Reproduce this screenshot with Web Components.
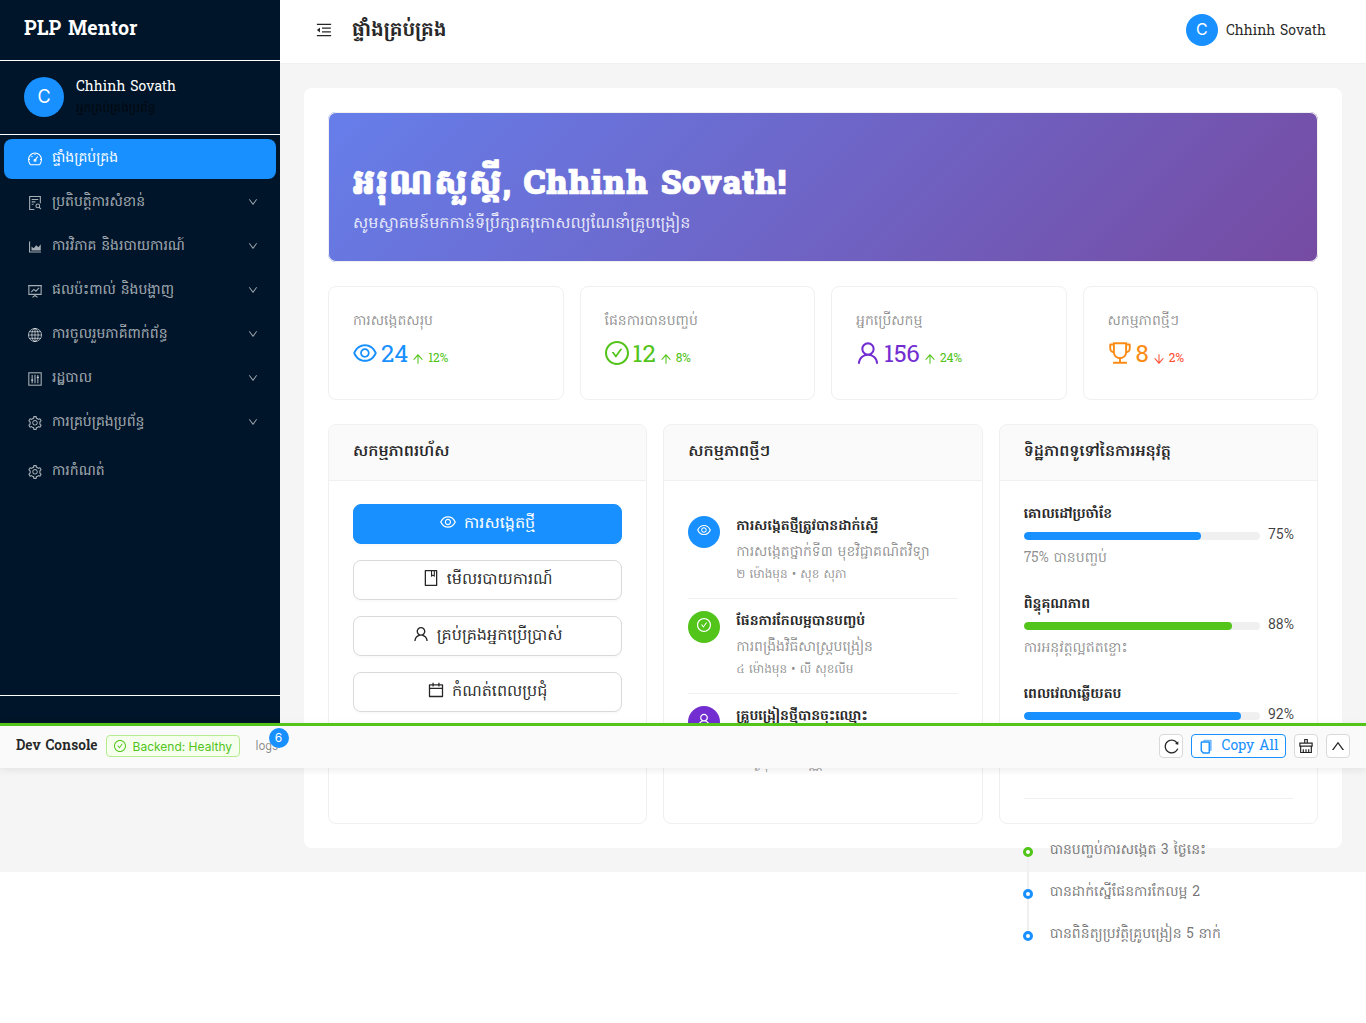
<!DOCTYPE html>
<html lang="km">
<head>
<meta charset="utf-8">
<title>PLP Mentor</title>
<style>
html,body{margin:0;padding:0;background:#fff;}
body{font-family:"Hanuman","Noto Sans Khmer","Roboto Slab","DejaVu Serif",serif;font-size:14px;color:rgba(0,0,0,.88);position:relative;height:1023px;overflow:hidden;}
</style>
</head>
<body>
<plp-app>
  <plp-sidebar slot="side">
    <plp-menu-item icon="dashboard" active>ផ្ទាំងគ្រប់គ្រង</plp-menu-item>
    <plp-menu-item icon="filesearch" arrow>ប្រតិបត្តិការសំខាន់</plp-menu-item>
    <plp-menu-item icon="area" arrow>ការវិភាគ និងរបាយការណ៍</plp-menu-item>
    <plp-menu-item icon="fund" arrow>ផលប៉ះពាល់ និងបង្ហាញ</plp-menu-item>
    <plp-menu-item icon="global" arrow>ការចូលរួមភាគីពាក់ព័ន្ធ</plp-menu-item>
    <plp-menu-item icon="control" arrow>រដ្ឋបាល</plp-menu-item>
    <plp-menu-item icon="setting" arrow>ការគ្រប់គ្រងប្រព័ន្ធ</plp-menu-item>
    <plp-menu-item icon="setting" spaced>ការកំណត់</plp-menu-item>
  </plp-sidebar>
  <plp-topbar slot="top"></plp-topbar>
  <hero-banner greet="អរុណសួស្តី," name="Chhinh Sovath!">សូមស្វាគមន៍មកកាន់ទីប្រឹក្សាគរុកោសល្យណែនាំគ្រូបង្រៀន</hero-banner>
  <stat-row>
    <stat-card label="ការសង្កេតសរុប" value="24" trend="12%" icon="eye" color="#1890ff"></stat-card>
    <stat-card label="ផែនការបានបញ្ចប់" value="12" trend="8%" icon="check" color="#52c41a"></stat-card>
    <stat-card label="អ្នកប្រើសកម្ម" value="156" trend="24%" icon="user" color="#722ed1"></stat-card>
    <stat-card label="សកម្មភាពថ្មីៗ" value="8" trend="2%" icon="trophy" color="#fa8c16" down></stat-card>
  </stat-row>
  <panel-row>
    <plp-panel heading="សកម្មភាពរហ័ស">
      <action-button icon="eye" primary>ការសង្កេតថ្មី</action-button>
      <action-button icon="book">មើលរបាយការណ៍</action-button>
      <action-button icon="user">គ្រប់គ្រងអ្នកប្រើប្រាស់</action-button>
      <action-button icon="calendar">កំណត់ពេលប្រជុំ</action-button>
    </plp-panel>
    <plp-panel heading="សកម្មភាពថ្មីៗ">
      <activity-item icon="eye" color="#1890ff" title="ការសង្កេតថ្មីត្រូវបានដាក់ស្នើ" desc="ការសង្កេតថ្នាក់ទី៣ មុខវិជ្ជាគណិតវិទ្យា" time="២ ម៉ោងមុន • សុខ សុភា"></activity-item>
      <activity-item icon="check" color="#52c41a" title="ផែនការកែលម្អបានបញ្ចប់" desc="ការពង្រឹងវិធីសាស្ត្របង្រៀន" time="៤ ម៉ោងមុន • លី សុខលីម"></activity-item>
      <activity-item icon="user" color="#722ed1" title="គ្រូបង្រៀនថ្មីបានចុះឈ្មោះ" desc="សាលាបឋមសិក្សាភ្នំពេញ" time="១ ថ្ងៃមុន • ជា វណ្ណា" last></activity-item>
    </plp-panel>
    <plp-panel heading="ទិដ្ឋភាពទូទៅនៃការអនុវត្ត">
      <progress-row label="គោលដៅប្រចាំខែ" pct="75" color="#1890ff" note="75% បានបញ្ចប់"></progress-row>
      <progress-row label="ពិន្ទុគុណភាព" pct="88" color="#52c41a" note="ការអនុវត្តល្អឥតខ្ចោះ"></progress-row>
      <progress-row label="ពេលវេលាឆ្លើយតប" pct="92" color="#1890ff" note="លឿនជាងមុន"></progress-row>
      <timeline-list>
        <timeline-item color="#52c41a">បានបញ្ចប់ការសង្កេត 3 ថ្ងៃនេះ</timeline-item>
        <timeline-item color="#1890ff">បានដាក់ស្នើផែនការកែលម្អ 2</timeline-item>
        <timeline-item color="#1890ff" last>បានពិនិត្យប្រវត្តិគ្រូបង្រៀន 5 នាក់</timeline-item>
      </timeline-list>
    </plp-panel>
  </panel-row>
</plp-app>
<dev-console></dev-console>
<script>
const PATHS={
eye:'<path fill="currentColor" d="M942.2 486.2C847.4 286.5 704.1 186 512 186c-192.2 0-335.4 100.5-430.2 300.3a60.3 60.3 0 000 51.5C176.6 737.5 319.9 838 512 838c192.2 0 335.4-100.5 430.2-300.3 7.7-16.2 7.7-35 0-51.5zM512 766c-161.3 0-279.4-81.8-362.7-254C232.6 339.8 350.7 258 512 258c161.3 0 279.4 81.8 362.7 254C791.5 684.2 673.4 766 512 766zm-4-430c-97.2 0-176 78.8-176 176s78.8 176 176 176 176-78.8 176-176-78.8-176-176-176zm0 288c-61.9 0-112-50.1-112-112s50.1-112 112-112 112 50.1 112 112-50.1 112-112 112z"/>',
check:'<path fill="currentColor" d="M699 353h-46.9c-10.2 0-19.9 4.9-25.9 13.3L469 584.3l-71.2-98.8c-6-8.3-15.6-13.3-25.9-13.3H325c-6.5 0-10.3 7.4-6.5 12.7l124.6 172.8a31.8 31.8 0 0051.7 0l210.6-292c3.9-5.3.1-12.7-6.4-12.7z"/><path fill="currentColor" d="M512 64C264.6 64 64 264.6 64 512s200.6 448 448 448 448-200.6 448-448S759.4 64 512 64zm0 820c-205.4 0-372-166.6-372-372s166.6-372 372-372 372 166.6 372 372-166.6 372-372 372z"/>',
user:'<path fill="currentColor" d="M858.5 763.6a374 374 0 00-80.6-119.5 375.63 375.63 0 00-119.5-80.6c-.4-.2-.8-.3-1.2-.5C719.5 518 760 444.7 760 362c0-137-111-248-248-248S264 225 264 362c0 82.7 40.5 156 102.8 201.1-.4.2-.8.3-1.2.5-44.8 18.9-85 46-119.5 80.6a375.63 375.63 0 00-80.6 119.5A371.7 371.7 0 00136 901.8a8 8 0 008 8.2h60c4.4 0 7.9-3.5 8-7.8 2-77.2 33-149.5 87.8-204.3 56.7-56.7 132-87.9 212.2-87.9s155.5 31.2 212.2 87.9C779 752.7 810 825 812 902.2c.1 4.4 3.6 7.8 8 7.8h60a8 8 0 008-8.2c-1-47.8-10.9-94.3-29.5-138.2zM512 534c-45.9 0-89.1-17.9-121.6-50.4S340 407.9 340 362c0-45.9 17.9-89.1 50.4-121.6S466.1 190 512 190s89.1 17.9 121.6 50.4S684 316.1 684 362c0 45.9-17.9 89.1-50.4 121.6S557.9 534 512 534z"/>',
trophy:'<path fill="currentColor" d="M868 160h-92v-40c0-4.4-3.6-8-8-8H256c-4.4 0-8 3.6-8 8v40h-92a44 44 0 00-44 44v148c0 81.7 60 149.6 138.2 162C265.7 630.2 359 721.7 476 734.5v105.2H280c-17.7 0-32 14.3-32 32V904c0 4.4 3.6 8 8 8h512c4.4 0 8-3.6 8-8v-32.3c0-17.7-14.3-32-32-32H548V734.5C665 721.7 758.3 630.2 773.8 514 852 501.6 912 433.7 912 352V204a44 44 0 00-44-44zM184 352V232h64v207.6a91.99 91.99 0 01-64-87.6zm520 128c0 49.1-19.1 95.4-53.9 130.1-34.8 34.8-81 53.9-130.1 53.9h-16c-49.1 0-95.3-19.1-130.1-53.9-34.8-34.8-53.9-81-53.9-130.1V184h384v296zm136-128c0 41-26.9 75.8-64 87.6V232h64v120z"/>',
up:'<path fill="currentColor" d="M868 545.5L536.1 163a31.96 31.96 0 00-48.3 0L156 545.5a7.97 7.97 0 006 13.2h81c4.6 0 9-2 12.1-5.5L474 300.9V864c0 4.4 3.6 8 8 8h60c4.4 0 8-3.6 8-8V300.9l218.9 252.3c3 3.5 7.4 5.5 12.1 5.5h81c6.8 0 10.5-8 6-13.2z"/>',
down:'<path fill="currentColor" d="M862 465.3h-81c-4.6 0-9 2-12.1 5.5L550 723.1V160c0-4.4-3.6-8-8-8h-60c-4.4 0-8 3.6-8 8v563.1L255.1 470.8c-3-3.5-7.4-5.5-12.1-5.5h-81c-6.8 0-10.5 8.1-6 13.2L487.9 861a31.96 31.96 0 0048.3 0L868 478.5c4.5-5.2.8-13.2-6-13.2z"/>',
chevdown:'<path fill="currentColor" d="M884 256h-75c-5.1 0-9.9 2.5-12.9 6.6L512 654.2 227.9 262.6c-3-4.1-7.8-6.6-12.9-6.6h-75c-6.5 0-10.3 7.4-6.5 12.7l352.6 486.1c12.8 17.6 39 17.6 51.7 0l352.6-486.1c3.9-5.3.1-12.7-6.4-12.7z"/>',
chevup:'<path fill="currentColor" d="M890.5 755.3L537.9 269.2c-12.8-17.6-39-17.6-51.7 0L133.5 755.3A8 8 0 00140 768h75c5.1 0 9.9-2.5 12.9-6.6L512 369.8l284.1 391.6c3 4.1 7.8 6.6 12.9 6.6h75c6.5 0 10.3-7.4 6.5-12.7z"/>',
setting:'<path fill="currentColor" d="M924.8 625.7l-65.5-56c3.1-19 4.7-38.4 4.7-57.8s-1.6-38.8-4.7-57.8l65.5-56a32.03 32.03 0 009.3-35.2l-.9-2.6a443.74 443.74 0 00-79.7-137.9l-1.8-2.1a32.12 32.12 0 00-35.1-9.5l-81.3 28.9c-30-24.6-63.5-44-99.7-57.6l-15.7-85a32.05 32.05 0 00-25.8-25.7l-2.7-.5c-52.1-9.4-106.9-9.4-159 0l-2.7.5a32.05 32.05 0 00-25.8 25.7l-15.8 85.4a351.86 351.86 0 00-99 57.4l-81.9-29.1a32 32 0 00-35.1 9.5l-1.8 2.1a446.02 446.02 0 00-79.7 137.9l-.9 2.6c-4.5 12.5-.8 26.5 9.3 35.2l66.3 56.6c-3.1 18.8-4.6 38-4.6 57.1 0 19.2 1.5 38.4 4.6 57.1L99 625.5a32.03 32.03 0 00-9.3 35.2l.9 2.6c18.1 50.4 44.9 96.9 79.7 137.9l1.8 2.1a32.12 32.12 0 0035.1 9.5l81.9-29.1c29.8 24.5 63.1 43.9 99 57.4l15.8 85.4a32.05 32.05 0 0025.8 25.7l2.7.5a449.4 449.4 0 00159 0l2.7-.5a32.05 32.05 0 0025.8-25.7l15.7-85a350 350 0 0099.7-57.6l81.3 28.9a32 32 0 0035.1-9.5l1.8-2.1c34.8-41.1 61.6-87.5 79.7-137.9l.9-2.6c4.5-12.3.8-26.3-9.3-35zM788.3 465.9c2.5 15.1 3.8 30.6 3.8 46.1s-1.3 31-3.8 46.1l-6.6 40.1 74.7 63.9a370.03 370.03 0 01-42.6 73.6L721 702.8l-31.4 25.8c-23.9 19.6-50.5 35-79.3 45.8l-38.1 14.3-17.9 97a377.5 377.5 0 01-85 0l-17.9-97.2-37.8-14.5c-28.5-10.8-55-26.2-78.7-45.7l-31.4-25.9-93.4 33.2c-17-22.9-31.2-47.6-42.6-73.6l75.5-64.5-6.5-40c-2.4-14.9-3.7-30.3-3.7-45.5 0-15.3 1.2-30.6 3.7-45.5l6.5-40-75.5-64.5c11.3-26.1 25.6-50.7 42.6-73.6l93.4 33.2 31.4-25.9c23.7-19.5 50.2-34.9 78.7-45.7l37.9-14.3 17.9-97.2c28.1-3.2 56.8-3.2 85 0l17.9 97 38.1 14.3c28.7 10.8 55.4 26.2 79.3 45.8l31.4 25.8 92.8-32.9c17 22.9 31.2 47.6 42.6 73.6L781.8 426l6.5 39.9zM512 326c-97.2 0-176 78.8-176 176s78.8 176 176 176 176-78.8 176-176-78.8-176-176-176zm79.2 255.2A111.6 111.6 0 01512 614c-29.9 0-58-11.7-79.2-32.8A111.6 111.6 0 01400 502c0-29.9 11.7-58 32.8-79.2C454 401.6 482.1 390 512 390c29.9 0 58 11.6 79.2 32.8A111.6 111.6 0 01624 502c0 29.9-11.7 58-32.8 79.2z"/>',
calendar:'<path fill="currentColor" d="M880 184H712v-64c0-4.4-3.6-8-8-8h-56c-4.4 0-8 3.6-8 8v64H384v-64c0-4.4-3.6-8-8-8h-56c-4.4 0-8 3.6-8 8v64H144c-17.7 0-32 14.3-32 32v664c0 17.7 14.3 32 32 32h736c17.7 0 32-14.3 32-32V216c0-17.7-14.3-32-32-32zm-40 656H184V460h656v380zM184 392V256h128v48c0 4.4 3.6 8 8 8h56c4.4 0 8-3.6 8-8v-48h256v48c0 4.4 3.6 8 8 8h56c4.4 0 8-3.6 8-8v-48h128v136H184z"/>',
fold:'<path fill="currentColor" d="M408 442h480c4.4 0 8-3.6 8-8v-56c0-4.4-3.6-8-8-8H408c-4.4 0-8 3.6-8 8v56c0 4.4 3.6 8 8 8zm-8 204c0 4.4 3.6 8 8 8h480c4.4 0 8-3.6 8-8v-56c0-4.4-3.6-8-8-8H408c-4.4 0-8 3.6-8 8v56zm504-486H120c-4.4 0-8 3.6-8 8v56c0 4.4 3.6 8 8 8h784c4.4 0 8-3.6 8-8v-56c0-4.4-3.6-8-8-8zm0 632H120c-4.4 0-8 3.6-8 8v56c0 4.4 3.6 8 8 8h784c4.4 0 8-3.6 8-8v-56c0-4.4-3.6-8-8-8zM115.4 518.9L271.7 642c5.8 4.6 14.4.5 14.4-6.9V388.9c0-7.4-8.5-11.5-14.4-6.9L115.4 505.1a8.74 8.74 0 000 13.8z"/>',
reload:'<path fill="currentColor" d="M909.1 209.3l-56.4 44.1C775.8 155.1 656.2 92 521.9 92 290 92 102.3 279.5 102 511.5 101.7 743.7 289.8 932 521.9 932c181.3 0 335.8-115 394.6-276.1 1.5-4.2-.7-8.9-4.9-10.3l-56.7-19.5a8 8 0 00-10.1 4.8c-1.8 5-3.8 10-5.9 14.9-17.3 41-42.1 77.8-73.7 109.4A344.77 344.77 0 01655.9 829c-42.3 17.9-87.4 27-133.8 27-46.5 0-91.5-9.1-133.8-27A341.5 341.5 0 01279 755.2a342.16 342.16 0 01-73.7-109.4c-17.9-42.4-27-87.4-27-133.9s9.1-91.5 27-133.9c17.3-41 42.1-77.8 73.7-109.4 31.6-31.6 68.4-56.4 109.3-73.8 42.3-17.9 87.4-27 133.8-27 46.5 0 91.5 9.1 133.8 27a341.5 341.5 0 01109.3 73.8c9.9 9.9 19.2 20.4 27.8 31.4l-60.2 47a8 8 0 003 14.1l175.6 43c5 1.2 9.9-2.6 9.9-7.7l.8-180.9c-.1-6.6-7.8-10.3-13-6.2z"/>',
book:'<path fill="currentColor" d="M832 64H192c-17.7 0-32 14.3-32 32v832c0 17.7 14.3 32 32 32h640c17.7 0 32-14.3 32-32V96c0-17.7-14.3-32-32-32zm-260 72h96v209.9L621.5 312 572 347.4V136zm220 752H232V136h280v296.9c0 3.3 1 6.6 3 9.3a15.9 15.9 0 0022.3 3.7l83.8-59.9 81.4 59.4c2.7 2 6 3.1 9.4 3.1 8.8 0 16-7.2 16-16V136h64v752z"/>',
copy:'<path fill="currentColor" opacity=".6" d="M350 110h430c22 0 40 18 40 40v590c0 22-18 40-40 40h-60V270c0-40-30-70-70-70H310v-50c0-22 18-40 40-40z"/><path fill="none" stroke="currentColor" stroke-width="84" d="M240 240h400c20 0 36 16 36 36v590c0 20-16 36-36 36H320L200 770V276c0-20 16-36 36-36z"/>',
clear:'<g fill="none" stroke="currentColor" stroke-width="76"><path d="M430 90h164v240H430zM120 330h784v190H120zM170 520v410h684V520"/><path d="M340 930V720M512 930V720M684 930V720"/></g>',
dashboard:'<g fill="none" stroke="currentColor" stroke-width="70"><path d="M512 130C290 130 100 300 100 540c0 110 30 230 100 320l28 20h568l28-20c70-90 100-210 100-320 0-240-190-410-412-410z"/><path d="M512 600L680 350"/><circle cx="512" cy="600" r="60"/><path d="M512 170v90M190 540h-90M924 540h-90M285 310l60 60"/></g>',
filesearch:'<g fill="none" stroke="currentColor" stroke-width="70"><path d="M470 925H170V100h684v420"/><path d="M300 290h420M300 440h240M300 590h120"/><circle cx="690" cy="700" r="120"/><path d="M780 790l110 120"/></g>',
area:'<path fill="currentColor" d="M888 792H200V168c0-4.4-3.6-8-8-8h-56c-4.4 0-8 3.6-8 8v688c0 4.4 3.6 8 8 8h752c4.4 0 8-3.6 8-8v-56c0-4.4-3.6-8-8-8z"/><path fill="currentColor" d="M288 728h592V340L730 520 590 400 430 590 288 480z"/>',
fund:'<g fill="none" stroke="currentColor" stroke-width="70"><path d="M70 170h884M120 170v560h784V170M512 730v70M350 920l162-120 162 120"/><path d="M270 580l170-170 130 110 200-210"/></g>',
global:'<g fill="none" stroke="currentColor" stroke-width="60"><circle cx="512" cy="512" r="420"/><ellipse cx="512" cy="512" rx="200" ry="420"/><path d="M512 92v840M92 512h840M150 300h724M150 724h724"/></g>',
control:'<g fill="none" stroke="currentColor" stroke-width="70"><rect x="115" y="115" width="794" height="794"/><path d="M512 240v540M330 260v520M694 260v520"/></g><path fill="currentColor" d="M260 540h140v90H260zM624 360h140v90H624z"/>'
};

function define(name, build, styles){
  customElements.define(name, class extends HTMLElement{
    connectedCallback(){
      if(this.shadowRoot) return;
      const s=this.attachShadow({mode:'open'});
      s.innerHTML='<style>'+styles+'</style>'+build(this);
    }
  });
}
const A=(el,n,d='')=>el.getAttribute(n)??d;
const ic=(n,size,extra='')=>`<ui-icon name="${n}" size="${size}" style="${extra}"></ui-icon>`;

define('ui-icon', el=>{
  const sz=A(el,'size','16');
  return `<svg width="${sz}" height="${sz}" viewBox="64 64 896 896" aria-hidden="true">${PATHS[A(el,'name')]||''}</svg>`;
}, ':host{display:inline-flex;line-height:0;flex:none}svg{display:block}');

const SANS='"Roboto","Noto Sans Khmer","Hanuman",sans-serif';
const INTER='"Inter","Hanuman",sans-serif';

define('plp-app', ()=>`
  <div class="page">
    <div class="side"><slot name="side"></slot></div>
    <div class="main">
      <slot name="top"></slot>
      <div class="content"><div class="sheet"><slot></slot></div></div>
    </div>
  </div>`,
`:host{display:block}
 .page{display:grid;grid-template-columns:280px 1fr;align-items:start;background:#f5f5f5}
 .side{height:768px;display:flex}
 .main{min-width:0}
 .content{padding:24px;height:760px}
 .sheet{background:#fff;border-radius:8px;padding:24px;height:760px;box-sizing:border-box;display:flex;flex-direction:column}
`);

define('plp-sidebar', ()=>`
  <div class="logo">PLP Mentor</div>
  <div class="user">
    <div class="av">C</div>
    <div class="meta"><div class="nm">Chhinh Sovath</div><div class="role">អ្នកគ្រប់គ្រងប្រព័ន្ធ</div></div>
  </div>
  <nav class="menu"><slot></slot></nav>
  <div class="foot"></div>`,
`:host{display:flex;flex-direction:column;width:280px;height:768px;background:#001529;color:#fff}
 .logo{height:60px;box-sizing:border-box;padding:0 24px;display:flex;align-items:center;font-size:20px;font-weight:700;flex:none}
 .user{flex:none;box-sizing:border-box;border-top:1px solid #fff;border-bottom:1px solid #fff;height:75px;padding:0 24px;display:flex;align-items:center;gap:12px}
 .av{width:40px;height:40px;border-radius:50%;background:#1890ff;display:flex;align-items:center;justify-content:center;font:18px ${INTER};color:#fff;flex:none;padding-bottom:2px;box-sizing:border-box;margin-top:-1px}
 .nm{font-size:14px;line-height:22px;color:#fff}
 .role{font-size:12px;line-height:20px;color:rgba(0,0,0,.65)}
 .menu{flex:1;min-height:0;padding-top:4px;display:flex;flex-direction:column}
 .foot{height:72px;flex:none;border-top:1px solid #fff}
`);

define('plp-menu-item', el=>`
  <div class="it ${el.hasAttribute('active')?'on':''}">
    ${ic(A(el,'icon'),14)}
    <span class="tx"><slot></slot></span>
    ${el.hasAttribute('arrow')?ic('chevdown',10,'margin:-2px 0 0 auto'):''}
  </div>`,
`:host{display:block;margin:0 4px 4px}
 :host([spaced]){margin-top:5px}
 .it{height:40px;box-sizing:border-box;padding:0 18px 0 24px;display:flex;align-items:center;gap:10px;border-radius:8px;color:rgba(255,255,255,.65);font-size:14px;line-height:40px}
 .it.on{background:#1890ff;color:#fff}
 .tx{display:block}
`);

define('plp-topbar', ()=>`
  <div class="l">${ic('fold',16,'margin-top:-1px')}<span class="t">ផ្ទាំងគ្រប់គ្រង</span></div>
  <div class="r"><span class="av">C</span><span class="nm">Chhinh Sovath</span></div>`,
`:host{display:flex;height:64px;box-sizing:border-box;background:#fff;border-bottom:1px solid #f0f0f0;align-items:center;justify-content:space-between;padding:0 40px 3px 36px}
 .l{display:flex;align-items:center;gap:20px;color:rgba(0,0,0,.85)}
 .t{font-size:20px;font-weight:700;line-height:28px;padding-top:1px}
 .r{display:flex;align-items:center;gap:8px}
 .av{width:32px;height:32px;border-radius:50%;background:#1890ff;color:#fff;display:flex;align-items:center;justify-content:center;font:16px ${INTER};padding-bottom:2px;box-sizing:border-box}
 .nm{font-size:14px;color:rgba(0,0,0,.85);padding-top:3px}
`);

define('hero-banner', el=>`
  <h1><span class="km">${A(el,'greet')}</span> <span class="en">${A(el,'name')}</span></h1>
  <p><slot></slot></p>`,
`:host{display:flex;flex-direction:column;justify-content:center;height:150px;flex:none;box-sizing:border-box;padding:27px 25px 0;border-radius:8px;background:linear-gradient(135deg,#667eea 0%,#764ba2 100%);color:#fff;margin-bottom:24px;box-shadow:0 0 0 1px #f0f0f0 inset}
 h1{margin:0;font-size:34px;line-height:44px;font-weight:900;color:#fff;-webkit-text-stroke:.7px #fff;white-space:nowrap}
 .km{letter-spacing:2px}
 .en{letter-spacing:.85px}
 p{margin:3px 0 0;font-size:16px;line-height:26px;color:rgba(255,255,255,.85)}
`);

define('stat-row', ()=>'<slot></slot>', ':host{display:grid;grid-template-columns:repeat(4,1fr);gap:16px;margin-bottom:24px;flex:none}');
define('panel-row', ()=>'<slot></slot>', ':host{display:grid;grid-template-columns:repeat(3,1fr);gap:16px;flex:none}');

define('stat-card', el=>`
  <div class="lb">${A(el,'label')}</div>
  <div class="val" style="color:${A(el,'color')}">
    ${ic(A(el,'icon'),24,'transform:translateY(-4px)')}
    <span class="n">${A(el,'value')}</span>
    <span class="tr ${el.hasAttribute('down')?'dn':''}">${ic(el.hasAttribute('down')?'down':'up',12)}<span>${A(el,'trend')}</span></span>
  </div>`,
`:host{display:block;box-sizing:border-box;height:114px;padding:24px;border:1px solid #f0f0f0;border-radius:8px;background:#fff}
 .lb{font-size:14px;line-height:22px;color:rgba(0,0,0,.45)}
 .val{display:flex;align-items:center;gap:4px;margin-top:5px;height:38px}
 .n{font-size:24px;line-height:32px}
 .tr{display:inline-flex;align-items:center;gap:4px;color:#52c41a;font-size:12px;padding-top:3px}
 .tr.dn{color:#ff4d2e}
`);

define('plp-panel', el=>`
  <div class="hd">${A(el,'heading')}</div>
  <div class="bd"><slot></slot></div>`,
`:host{display:block;box-sizing:border-box;height:400px;border:1px solid #f0f0f0;border-radius:8px;background:#fff}
 .hd{height:56px;box-sizing:border-box;background:#fafafa;border-bottom:1px solid #f0f0f0;border-radius:8px 8px 0 0;padding:0 24px 2px;display:flex;align-items:center;font-size:16px;font-weight:600;color:rgba(0,0,0,.85)}
 .bd{padding:23px 24px 0;display:flex;flex-direction:column}
`);

define('action-button', el=>`
  <div class="b ${el.hasAttribute('primary')?'p':''}">${ic(A(el,'icon'),16,'margin-top:-5px')}<span class="x"><slot></slot></span></div>`,
`:host{display:block;margin-bottom:16px}
 .b{height:40px;box-sizing:border-box;border:1px solid #d9d9d9;border-radius:8px;background:#fff;color:rgba(0,0,0,.85);display:flex;align-items:center;justify-content:center;gap:8px;font-size:16px;box-shadow:0 2px 0 rgba(0,0,0,.02)}
 .b.p{background:#1890ff;border-color:#1890ff;color:#fff}
 .x{padding-bottom:1px}
`);

define('activity-item', el=>`
  <div class="av" style="background:${A(el,'color')}">${ic(A(el,'icon'),14)}</div>
  <div class="tx">
    <div class="t">${A(el,'title')}</div>
    <div class="d">${A(el,'desc')}</div>
    <div class="m">${A(el,'time')}</div>
  </div>`,
`:host{display:flex;gap:16px;padding:12px 0;height:95px;box-sizing:border-box;border-bottom:1px solid #f0f0f0;align-items:flex-start}
 :host([last]){border-bottom:0}
 .av{width:32px;height:32px;border-radius:50%;color:#fff;display:flex;align-items:center;justify-content:center;flex:none;padding-bottom:4px;box-sizing:border-box}
 .tx{padding-top:1px}
 .t{font-size:14px;font-weight:700;line-height:20px;color:rgba(0,0,0,.85)}
 .d{font-size:14px;line-height:22px;margin-top:5px;color:rgba(0,0,0,.45)}
 .m{font-size:12px;line-height:20px;margin-top:1px;color:rgba(0,0,0,.45)}
`);

define('progress-row', el=>`
  <div class="l">${A(el,'label')}</div>
  <div class="r"><div class="tr"><div class="f" style="width:${A(el,'pct')}%;background:${A(el,'color')}"></div></div><span class="p">${A(el,'pct')}%</span></div>
  <div class="n">${A(el,'note')}</div>`,
`:host{display:block;height:66px;margin-bottom:24px}
 .l{font-size:14px;font-weight:700;line-height:20px;color:rgba(0,0,0,.85);margin-top:1px}
 .r{display:flex;align-items:center;gap:8px;height:22px}
 .tr{flex:1;height:8px;border-radius:4px;background:#f0f0f0;overflow:hidden}
 .f{height:100%;border-radius:4px}
 .p{font:14px/22px ${SANS};color:rgba(0,0,0,.75);width:25px;text-align:right;white-space:nowrap;margin-top:-4px}
 .n{font-size:14px;line-height:24px;color:rgba(0,0,0,.45)}
`);

define('timeline-list', ()=>'<slot></slot>', ':host{display:block;border-top:1px solid #f0f0f0;margin-top:24px;padding-top:41px}');
define('timeline-item', el=>`
  <span class="dot" style="border-color:${A(el,'color')}"></span>
  ${el.hasAttribute('last')?'':'<span class="tail"></span>'}
  <span class="tx"><slot></slot></span>`,
`:host{display:block;position:relative;height:42px;padding-left:26px;box-sizing:border-box}
 .dot{position:absolute;left:-1px;top:7px;width:10px;height:10px;box-sizing:border-box;border:3px solid;border-radius:50%;background:#fff}
 .tail{position:absolute;left:3px;top:17px;width:2px;height:32px;background:#f0f0f0}
 .tx{font-size:14px;line-height:22px;color:rgba(0,0,0,.55);display:block}
`);

define('dev-console', ()=>`
  <b class="t">Dev Console</b>
  <span class="hb">${ic('check',12)}<span>Backend: Healthy</span></span>
  <span class="logs">logs<i class="cnt">6</i></span>
  <span class="sp"></span>
  <span class="btn">${ic('reload',15)}</span>
  <span class="btn copy">${ic('copy',15)}<span>Copy All</span></span>
  <span class="btn">${ic('clear',14)}</span>
  <span class="btn">${ic('chevup',14)}</span>`,
`:host{position:absolute;left:0;right:0;top:723px;height:45px;box-sizing:border-box;border-top:3px solid #52c41a;background:#fafafa;box-shadow:0 2px 8px rgba(0,0,0,.08);display:flex;align-items:center;padding:0 16px 2px;gap:8px;z-index:10}
 .t{font-size:14px;font-weight:700;color:rgba(0,0,0,.85)}
 .hb{display:inline-flex;align-items:center;gap:7px;height:22px;width:134px;box-sizing:border-box;padding:0 7px;border:1px solid #b7eb8f;border-radius:4px;background:#f6ffed;color:#52c41a;font:12px ${INTER};white-space:nowrap}
 .logs{position:relative;font:12px ${SANS};color:rgba(0,0,0,.45);margin:0 0 0 8px}
 .cnt{position:absolute;left:13px;top:-11px;width:20px;height:20px;border-radius:50%;background:#1890ff;color:#fff;font:normal 12px/20px ${INTER};text-align:center}
 .sp{flex:1}
 .btn{height:24px;min-width:24px;box-sizing:border-box;border:1px solid #d9d9d9;border-radius:4px;background:#fff;display:inline-flex;align-items:center;justify-content:center;color:rgba(0,0,0,.85);gap:8px;font-size:14px;white-space:nowrap}
 .copy{border-color:#1890ff;color:#1890ff;padding:0 7px;width:95px}
`);
</script>
</body>
</html>
